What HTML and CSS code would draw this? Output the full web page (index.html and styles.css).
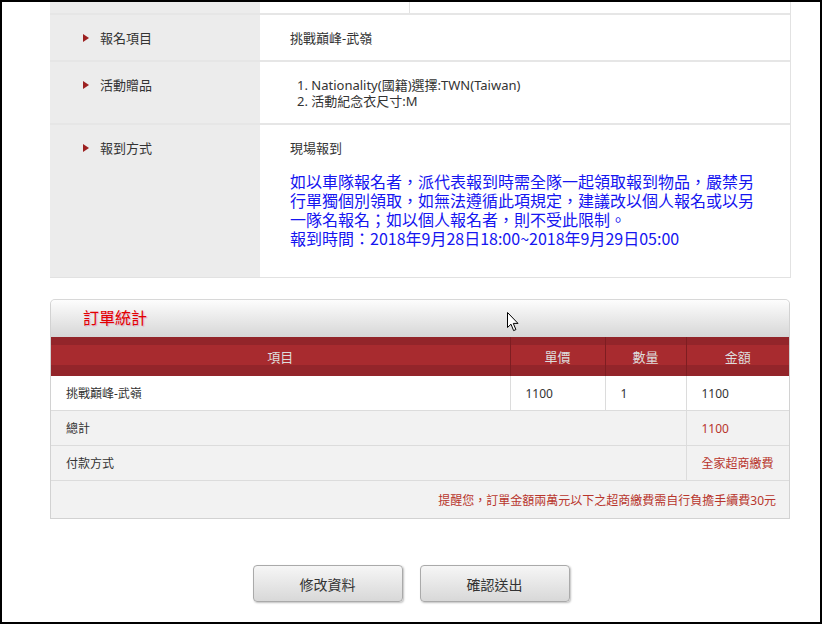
FILE: index.html
```html
<!DOCTYPE html>
<html>
<head>
  <meta charset="UTF-8" />
  <title>訂單確認</title>
  <link rel="stylesheet" href="styles.css">
</head>
<body>
  <div class="screen">

    <!-- Registration info -->
    <div class="info">
      <div class="info-row cut">
        <div class="label"></div>
        <div class="value split"><span></span><span></span></div>
      </div>

      <div class="info-row">
        <div class="label"><span class="marker"></span>報名項目</div>
        <div class="value">挑戰巔峰-武嶺</div>
      </div>

      <div class="info-row">
        <div class="label"><span class="marker"></span>活動贈品</div>
        <div class="value">
          <div class="gift">1. Nationality(國籍)選擇:TWN(Taiwan)</div>
          <div class="gift">2. 活動紀念衣尺寸:M</div>
        </div>
      </div>

      <div class="info-row last">
        <div class="label"><span class="marker"></span>報到方式</div>
        <div class="value">
          現場報到
          <p class="notice">如以車隊報名者，派代表報到時需全隊一起領取報到物品，嚴禁另行單獨個別領取，如無法遵循此項規定，建議改以個人報名或以另一隊名報名；如以個人報名者，則不受此限制。<br>報到時間：2018年9月28日18:00~2018年9月29日05:00</p>
        </div>
      </div>
    </div>

    <!-- Order summary -->
    <div class="order">
      <div class="order-head">訂單統計</div>
      <table class="order-table">
        <colgroup>
          <col class="c-item">
          <col class="c-price">
          <col class="c-qty">
          <col class="c-sum">
        </colgroup>
        <thead>
          <tr>
            <th>項目</th>
            <th>單價</th>
            <th>數量</th>
            <th>金額</th>
          </tr>
        </thead>
        <tbody>
          <tr class="item">
            <td>挑戰巔峰-武嶺</td>
            <td>1100</td>
            <td>1</td>
            <td>1100</td>
          </tr>
          <tr class="grey">
            <td colspan="3">總計</td>
            <td class="red">1100</td>
          </tr>
          <tr class="grey">
            <td colspan="3">付款方式</td>
            <td class="red">全家超商繳費</td>
          </tr>
          <tr class="grey note">
            <td colspan="4" class="red">提醒您，訂單金額兩萬元以下之超商繳費需自行負擔手續費30元</td>
          </tr>
        </tbody>
      </table>
    </div>

    <div class="actions">
      <button type="button">修改資料</button>
      <button type="button">確認送出</button>
    </div>

    <!-- mouse pointer left in the capture -->
    <svg class="cursor" width="13" height="20" viewBox="0 0 13 20">
      <path d="M0.5 0.5 L0.5 15.5 L4 12.2 L6.6 18.6 L8.9 17.6 L6.3 11.4 L11 11.4 Z" fill="#fff" stroke="#000" stroke-width="1" stroke-linejoin="round"/>
    </svg>
  </div>
</body>
</html>
```

FILE: styles.css
```css
html, body {
  margin: 0;
  padding: 0;
  background: #000;
}

body {
  font-family: "Noto Sans", "Noto Sans CJK TC", sans-serif;
  color: #333;
}

.screen {
  position: relative;
  margin: 2px;
  width: 818px;
  height: 620px;
  background: #fff;
  overflow: hidden;
}

/* Registration info */
.info {
  margin-left: 48px;
  width: 740px;
  border-right: 1px solid #e2e2e2;
}

.info-row {
  display: grid;
  grid-template-columns: 210px 1fr;
  border-bottom: 2px solid #e6e6e6;
}

.info-row.last {
  border-bottom: 1px solid #e2e2e2;
}

.info-row.cut {
  height: 11px;
}

.label {
  background: #ececec;
  padding: 15px 0 14px 33px;
  font-size: 13px;
  line-height: 16px;
  display: flex;
  align-items: flex-start;
}

.info-row.cut .label,
.info-row.cut .value {
  padding: 0;
}

.marker {
  width: 0;
  height: 0;
  border-top: 4px solid transparent;
  border-bottom: 4px solid transparent;
  border-left: 6px solid #9c2020;
  margin: 4px 11px 0 0;
}

.value {
  padding: 15px 20px 14px 30px;
  font-size: 13px;
  line-height: 16px;
}

.value.split {
  display: grid;
  grid-template-columns: 150px 1fr;
}

.value.split span:first-child {
  border-right: 1px solid #e2e2e2;
}

.gift {
  padding-left: 7px;
}

.notice {
  margin: 16px 0 15px;
  max-width: 470px;
  color: #1515f0;
  font-family: "Noto Sans CJK TC", sans-serif;
  font-size: 16px;
  line-height: 19px;
}

/* Order summary */
.order {
  margin: 21px 0 0 48px;
  width: 738px;
  border: 1px solid #d2d2d2;
  border-top-color: #d8d8d8;
  border-radius: 5px 5px 0 0;
}

.order-head {
  height: 37px;
  line-height: 37px;
  padding-left: 32px;
  border-radius: 5px 5px 0 0;
  background: linear-gradient(#fdfdfd, #d6d6d6);
  color: #e30000;
  font-size: 16px;
  text-shadow: 1px 1px 1px rgba(210, 60, 130, 0.35);
}

.order-table {
  width: 100%;
  border-collapse: collapse;
  table-layout: fixed;
  font-size: 12px;
}

.c-item { width: 459px; }
.c-price { width: 95px; }
.c-qty { width: 81px; }
.c-sum { width: 103px; }

.order-table th {
  height: 39px;
  padding: 0;
  font-weight: normal;
  font-size: 13px;
  color: #ddd;
  background: linear-gradient(#93252a 0, #93252a 8px, #a82b2f 8px, #a82b2f 28px, #93252a 28px);
  border-left: 1px solid #7e1d21;
}

.order-table th:first-child {
  border-left: none;
}

.order-table td {
  padding: 0 0 0 15px;
  height: 34px;
  border-bottom: 1px solid #dcdcdc;
  border-left: 1px solid #dcdcdc;
}

.order-table td:first-child {
  border-left: none;
}

.order-table tr.item td:first-child {
  padding-left: 15px;
}

.order-table tr.grey td {
  background: #f2f2f2;
}

.order-table tr.note td {
  height: 37px;
  border-bottom: none;
  text-align: right;
  padding-right: 13px;
}

.red {
  color: #b8352c;
}

/* Buttons */
.actions {
  display: flex;
  justify-content: center;
  gap: 17px;
  margin-top: 46px;
}

.actions button {
  width: 150px;
  height: 37px;
  border: 1px solid #aaa;
  border-radius: 4px;
  background: linear-gradient(#f6f6f6, #d8d8d8);
  box-shadow: 1px 1px 2px rgba(0, 0, 0, 0.25);
  font-family: "Noto Sans CJK TC", sans-serif;
  font-size: 14px;
  color: #333;
}

.cursor {
  position: absolute;
  left: 505px;
  top: 310px;
}
```
